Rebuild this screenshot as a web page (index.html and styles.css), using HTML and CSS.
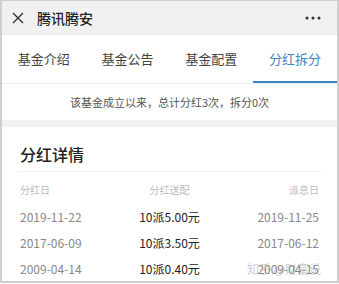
FILE: index.html
```html
<!DOCTYPE html>
<html lang="zh-CN">
<head>
  <meta charset="UTF-8" />
  <meta name="viewport" content="width=device-width, initial-scale=1.0"/>
  <title>腾讯腾安 - 分红拆分</title>
  <link rel="stylesheet" href="styles.css">
</head>
<body>
  <div class="frame">
    <div class="topbar">
      <span class="close">
        <svg width="12" height="12" viewBox="0 0 12 12"><path d="M1 1L11 11M11 1L1 11" stroke="#333" stroke-width="1.4" fill="none"/></svg>
      </span>
      <span class="title">腾讯腾安</span>
      <span class="more">
        <svg width="16" height="4" viewBox="0 0 16 4"><circle cx="2" cy="2" r="1.5" fill="#333"/><circle cx="8" cy="2" r="1.5" fill="#333"/><circle cx="14" cy="2" r="1.5" fill="#333"/></svg>
      </span>
    </div>

    <div class="tabs">
      <div class="tab">基金介绍</div>
      <div class="tab">基金公告</div>
      <div class="tab">基金配置</div>
      <div class="tab active">分红拆分</div>
    </div>

    <div class="notice">该基金成立以来，总计分红3次，拆分0次</div>

    <div class="card">
      <h2>分红详情</h2>
      <div class="row head">
        <span>分红日</span>
        <span class="mid">分红送配</span>
        <span class="end">派息日</span>
      </div>
      <div class="row">
        <span>2019-11-22</span>
        <span class="mid">10派5.00元</span>
        <span class="end">2019-11-25</span>
      </div>
      <div class="row">
        <span>2017-06-09</span>
        <span class="mid">10派3.50元</span>
        <span class="end">2017-06-12</span>
      </div>
      <div class="row">
        <span>2009-04-14</span>
        <span class="mid">10派0.40元</span>
        <span class="end">2009-04-15</span>
      </div>
      <div class="watermark">知乎 @财富说</div>
    </div>
  </div>
</body>
</html>
```

FILE: styles.css
```css
* {
  margin: 0;
  padding: 0;
  box-sizing: border-box;
  font-family: "Noto Sans CJK SC", "Noto Sans", sans-serif;
}

body {
  background: #fff;
  width: 339px;
  height: 284px;
  overflow: hidden;
}

.frame {
  width: 339px;
  height: 283px;
  border: 2px solid #cfcfcf;
  border-top-width: 1px;
  overflow: hidden;
  position: relative;
  background: #fff;
}

.topbar {
  height: 34px;
  background: #f1f1f1;
  display: flex;
  align-items: center;
  padding: 0 12px 0 10px;
  border-bottom: 1px solid #e6e6e6;
}

.close {
  display: flex;
  width: 14px;
  margin-right: 11px;
}

.title {
  font-size: 14px;
  font-weight: 500;
  color: #222;
  flex: 1;
}

.more {
  display: flex;
  margin-right: 4px;
}

.tabs {
  display: flex;
  height: 49px;
  border-bottom: 1px solid #eee;
}

.tab {
  flex: 1;
  display: flex;
  align-items: center;
  justify-content: center;
  font-size: 13px;
  color: #444;
  padding-bottom: 1px;
}

.tab.active {
  color: #3f86c6;
  border-bottom: 2px solid #3f86c6;
  padding-bottom: 0;
}

.notice {
  height: 36px;
  display: flex;
  align-items: center;
  justify-content: center;
  font-size: 11px;
  color: #555;
  border-bottom: 7px solid #f2f2f2;
  box-sizing: content-box;
}

.card {
  padding: 0 16px;
  position: relative;
}

h2 {
  font-size: 16px;
  font-weight: 500;
  color: #222;
  height: 45px;
  display: flex;
  align-items: center;
  padding-left: 2px;
  padding-top: 10px;
  border-bottom: 1px solid #f0f0f0;
}

.row {
  display: grid;
  grid-template-columns: 1fr 1fr 1fr;
  height: 26px;
  align-items: center;
  font-size: 12px;
  color: #888;
  padding: 0 2px;
}

.row.head {
  font-size: 10px;
  color: #bbb;
  height: 31px;
  padding-top: 4px;
}

.mid {
  text-align: center;
  color: #222;
}

.head .mid {
  color: #bbb;
}

.end {
  text-align: right;
}

.watermark {
  position: absolute;
  right: 16px;
  bottom: 4px;
  font-size: 12px;
  color: rgba(150, 150, 150, 0.5);
}
```
